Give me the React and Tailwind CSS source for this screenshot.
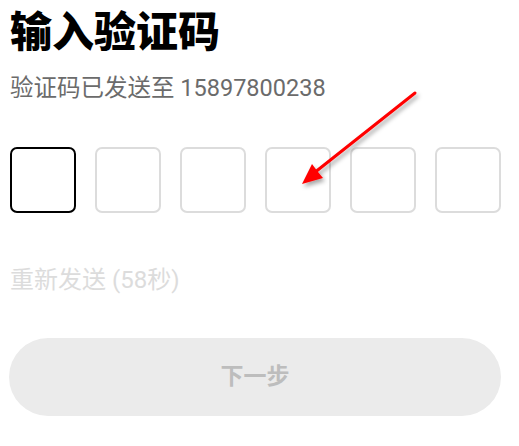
import React from "react";

const font = { fontFamily: "Roboto, 'Noto Sans CJK SC', sans-serif" };

const CodeBox = ({ active }) => (
  <div
    className={
      "w-[66px] h-[66px] rounded-[7px] border-2 bg-white " +
      (active ? "border-black" : "border-[#dcdcdc]")
    }
  />
);

const Arrow = () => (
  <svg
    className="absolute left-0 top-0 pointer-events-none"
    width="519"
    height="446"
    viewBox="0 0 519 446"
  >
    <defs>
      <filter id="shadow" x="-20%" y="-20%" width="140%" height="140%">
        <feDropShadow dx="2" dy="3" stdDeviation="2" floodColor="#000" floodOpacity="0.35" />
      </filter>
    </defs>
    <g filter="url(#shadow)">
      <line x1="415" y1="93" x2="314" y2="173" stroke="#ff0000" strokeWidth="3" strokeLinecap="round" />
      <polygon points="302,184 312,164 318,172 323,178" fill="#ff0000" />
    </g>
  </svg>
);

const App = () => {
  return (
    <div className="relative w-[519px] h-[446px] bg-white overflow-hidden" style={font}>
      <div className="px-[10px] pt-[12px]">
        <h1 className="text-[42px] leading-[42px] font-black text-black">输入验证码</h1>
        <p className="mt-[22px] text-[23.5px] leading-[24px] text-[#6b6b6b]">
          验证码已发送至 15897800238
        </p>

        <div className="mt-[47px] flex justify-between w-[491px]">
          <CodeBox active />
          <CodeBox />
          <CodeBox />
          <CodeBox />
          <CodeBox />
          <CodeBox />
        </div>

        <p className="mt-[55px] text-[24px] leading-[24px] text-[#dcdcdc]">重新发送 (58秒)</p>

        <button
          type="button"
          className="mt-[46px] w-[492px] -ml-px h-[78px] rounded-full bg-[#ebebeb] text-[#bdbdbd] text-[23px] font-bold"
        >
          下一步
        </button>
      </div>
      <Arrow />
    </div>
  );
};

export default App;
